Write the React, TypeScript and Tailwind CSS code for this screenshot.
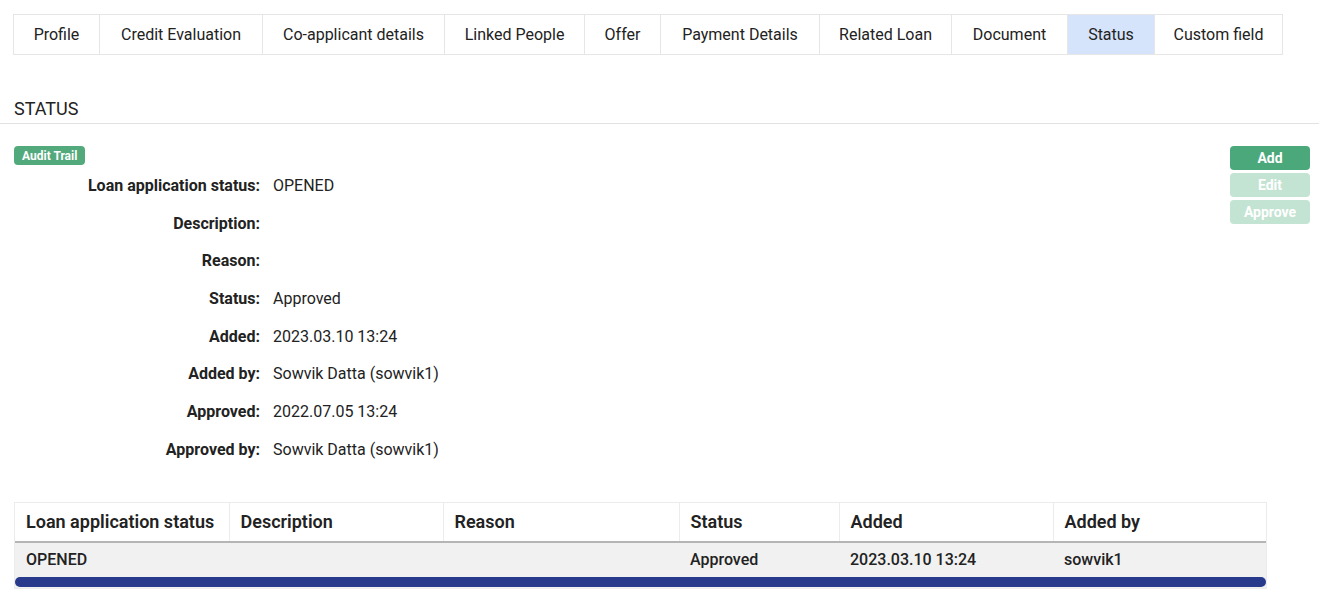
const tabs = [
  { label: "Profile", w: "w-[85px]" },
  { label: "Credit Evaluation", w: "w-[163px]" },
  { label: "Co-applicant details", w: "w-[182px]" },
  { label: "Linked People", w: "w-[140px]" },
  { label: "Offer", w: "w-[76px]" },
  { label: "Payment Details", w: "w-[159px]" },
  { label: "Related Loan", w: "w-[132px]" },
  { label: "Document", w: "w-[116px]" },
  { label: "Status", w: "w-[87px]", active: true },
  { label: "Custom field", w: "w-[128px]" },
];

const details: [string, string][] = [
  ["Loan application status:", "OPENED"],
  ["Description:", ""],
  ["Reason:", ""],
  ["Status:", "Approved"],
  ["Added:", "2023.03.10 13:24"],
  ["Added by:", "Sowvik Datta (sowvik1)"],
  ["Approved:", "2022.07.05 13:24"],
  ["Approved by:", "Sowvik Datta (sowvik1)"],
];

const columns = [
  { label: "Loan application status", w: "w-[214px]" },
  { label: "Description", w: "w-[214px]" },
  { label: "Reason", w: "w-[236px]" },
  { label: "Status", w: "w-[160px]" },
  { label: "Added", w: "w-[214px]" },
  { label: "Added by", w: "w-[213px]" },
];

const row = ["OPENED", "", "", "Approved", "2023.03.10 13:24", "sowvik1"];

export default function App() {
  return (
    <div className="min-h-screen bg-white text-[#222] font-['Roboto',sans-serif]">
      <div className="px-[13px] pt-[14px]">
        <nav className="flex w-fit border border-[#e6e6e6]">
          {tabs.map((t, i) => (
            <div
              key={t.label}
              className={`${t.w} flex h-[39px] items-center justify-center text-[16px] ${
                i > 0 ? "border-l border-[#e6e6e6]" : ""
              } ${t.active ? "bg-[#d6e4fb]" : "bg-white"}`}
            >
              {t.label}
            </div>
          ))}
        </nav>
      </div>

      <h2 className="mt-[42px] px-[14px] text-[18px] leading-[24px]">STATUS</h2>
      <div className="mt-[2px] border-b border-[#e2e2e2]" />

      <section className="flex justify-between pl-[14px] pr-[9px] pt-[22px]">
        <div>
          <span className="flex h-[19px] w-fit items-center rounded-[4px] bg-[#52a97c] px-[8px] text-[12px] font-bold text-white">
            Audit Trail
          </span>
          <dl className="mt-[2px] grid grid-cols-[246px_1fr] gap-x-[13px]">
            {details.map(([label, value]) => (
              <div key={label} className="contents">
                <dt className="flex h-[37.7px] items-center justify-end text-[16px] font-bold">
                  {label}
                </dt>
                <dd className="flex h-[37.7px] items-center text-[16px]">{value}</dd>
              </div>
            ))}
          </dl>
        </div>

        <div className="flex w-[80px] flex-col gap-[3px]">
          <button className="h-[24px] rounded-[4px] bg-[#4aa87a] text-[14px] font-bold text-white">
            Add
          </button>
          <button className="h-[24px] rounded-[4px] bg-[#c3e3d3] text-[14px] font-bold text-white">
            Edit
          </button>
          <button className="h-[24px] rounded-[4px] bg-[#c3e3d3] text-[14px] font-bold text-white">
            Approve
          </button>
        </div>
      </section>

      <div className="mx-[14px] mt-[33px] w-[1253px] border border-[#ececec]">
        <table className="w-full table-fixed border-collapse">
          <thead>
            <tr className="border-b-2 border-[#b5b5b5] bg-white">
              {columns.map((c, i) => (
                <th
                  key={c.label}
                  className={`${c.w} h-[39px] px-[11px] text-left text-[18px] font-semibold ${
                    i > 0 ? "border-l border-[#ececec]" : ""
                  }`}
                >
                  {c.label}
                </th>
              ))}
            </tr>
          </thead>
          <tbody>
            <tr className="bg-[#f1f1f1]">
              {row.map((v, i) => (
                <td key={i} className="h-[35px] px-[11px] text-[16px] font-medium">
                  {v}
                </td>
              ))}
            </tr>
          </tbody>
        </table>
        <div className="h-[11px] bg-[#f1f1f1] pb-[1px]">
          <div className="h-[10px] rounded-full bg-[#283a8c]" />
        </div>
      </div>
    </div>
  );
}
